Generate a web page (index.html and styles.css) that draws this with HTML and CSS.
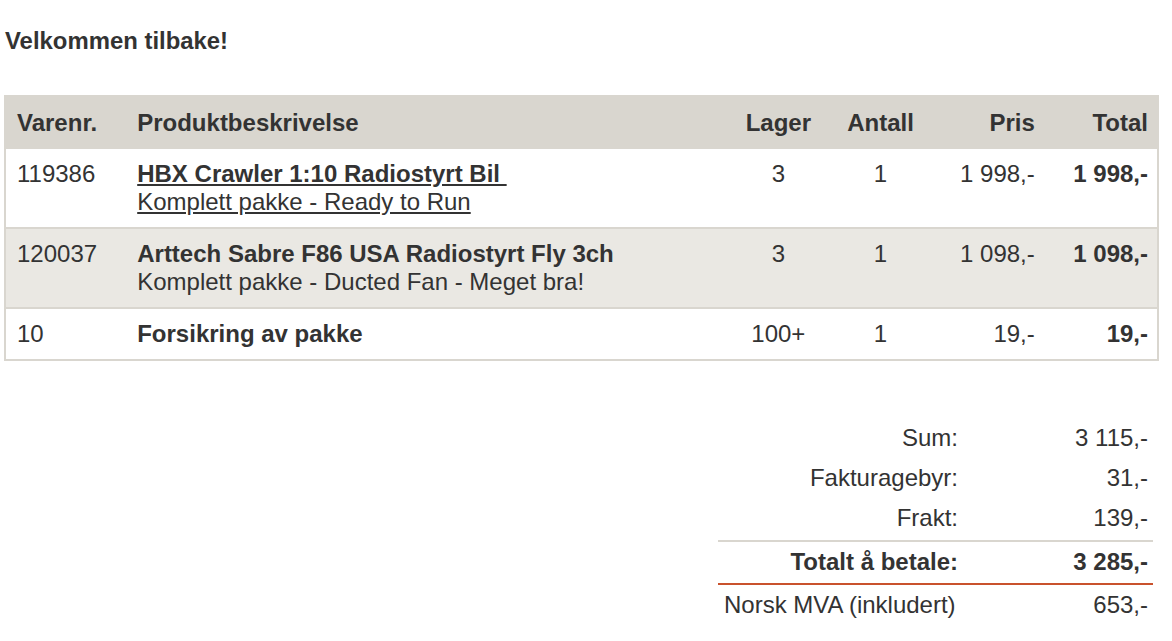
FILE: index.html
```html
<!DOCTYPE html>
<html lang="no">
<head>
<meta charset="utf-8">
<title>Handlekurv</title>
<link rel="stylesheet" href="styles.css">
</head>
<body>
<h1 class="welcome">Velkommen tilbake!</h1>

<table class="cart">
  <colgroup>
    <col class="c-nr">
    <col class="c-desc">
    <col class="c-stock">
    <col class="c-qty">
    <col class="c-price">
    <col class="c-total">
  </colgroup>
  <thead>
    <tr>
      <th class="nr">Varenr.</th>
      <th class="desc">Produktbeskrivelse</th>
      <th class="stock">Lager</th>
      <th class="qty">Antall</th>
      <th class="price">Pris</th>
      <th class="total">Total</th>
    </tr>
  </thead>
  <tbody>
    <tr>
      <td class="nr">119386</td>
      <td class="desc"><a class="prod-link" href="#"><strong>HBX Crawler 1:10 Radiostyrt Bil&nbsp;</strong><br>Komplett pakke - Ready to Run</a></td>
      <td class="stock">3</td>
      <td class="qty">1</td>
      <td class="price">1 998,-</td>
      <td class="total">1 998,-</td>
    </tr>
    <tr class="alt">
      <td class="nr">120037</td>
      <td class="desc"><strong>Arttech Sabre F86 USA Radiostyrt Fly 3ch</strong><br>Komplett pakke - Ducted Fan - Meget bra!</td>
      <td class="stock">3</td>
      <td class="qty">1</td>
      <td class="price">1 098,-</td>
      <td class="total">1 098,-</td>
    </tr>
    <tr>
      <td class="nr">10</td>
      <td class="desc"><strong>Forsikring av pakke</strong></td>
      <td class="stock">100+</td>
      <td class="qty">1</td>
      <td class="price">19,-</td>
      <td class="total">19,-</td>
    </tr>
  </tbody>
</table>

<div class="summary-wrap">
  <table class="summary">
    <tr>
      <td class="label">Sum:</td>
      <td class="value">3 115,-</td>
    </tr>
    <tr>
      <td class="label">Fakturagebyr:</td>
      <td class="value">31,-</td>
    </tr>
    <tr class="before-total">
      <td class="label">Frakt:</td>
      <td class="value">139,-</td>
    </tr>
    <tr class="grand">
      <td class="label">Totalt å betale:</td>
      <td class="value">3 285,-</td>
    </tr>
    <tr class="vat">
      <td class="label">Norsk MVA (inkludert)</td>
      <td class="value">653,-</td>
    </tr>
  </table>
</div>
</body>
</html>
```

FILE: styles.css
```css
html, body {
  margin: 0;
  padding: 0;
  background: #ffffff;
}

body {
  font-family: Arial, "Liberation Sans", sans-serif;
  font-size: 24px;
  line-height: 28px;
  color: #333333;
  padding: 0 0 0 4px;
}

.welcome {
  font-size: 23.9px;
  font-weight: bold;
  line-height: 28px;
  margin: 27px 0 0 1px;
}

.cart {
  margin-top: 40px;
  width: 1155px;
  border-collapse: collapse;
  table-layout: fixed;
  border: 2px solid #d9d6cf;
}

.c-nr { width: 120px; }
.c-desc { width: 609px; }
.c-stock { width: 86px; }
.c-qty { width: 118px; }
.c-price { width: 107px; }
.c-total { width: 111px; }

.cart th {
  background: #d9d6cf;
  font-weight: bold;
  padding: 12px 0 12px 0;
  text-align: left;
  white-space: nowrap;
}

.cart td {
  padding: 11px 0 11px 0;
  vertical-align: top;
  white-space: nowrap;
}

.cart tbody tr {
  border-top: 2px solid #d9d6cf;
}

.cart tbody tr:first-child {
  border-top: 0;
}

.cart tr.alt td {
  background: #eae8e3;
}

.cart .nr {
  padding-left: 11px;
}

.cart .desc {
  padding-left: 12px;
}

.cart .stock,
.cart .qty {
  text-align: center;
}

.cart .price {
  text-align: right;
  padding-right: 12px;
}

.cart .total {
  text-align: right;
  padding-right: 9px;
}

.cart td.total {
  font-weight: bold;
}

.prod-link {
  color: #333333;
  text-decoration: underline;
}

.summary-wrap {
  display: flex;
  justify-content: flex-end;
  margin-top: 57px;
  padding-right: 19px;
}

.summary {
  width: 435px;
  border-collapse: collapse;
}

.summary td {
  padding: 6px 0;
  white-space: nowrap;
}

.summary .label {
  text-align: right;
  padding-left: 6px;
  padding-right: 6px;
}

.summary .value {
  text-align: right;
  width: 184px;
  padding-right: 5px;
}

.summary tr.before-total td {
  padding-bottom: 8px;
  border-bottom: 2px solid #d9d6cf;
}

.summary tr.grand td {
  font-weight: bold;
  padding-bottom: 7px;
  border-bottom: 2px solid #c9522d;
}

.summary tr.vat .label {
  text-align: left;
}
```
